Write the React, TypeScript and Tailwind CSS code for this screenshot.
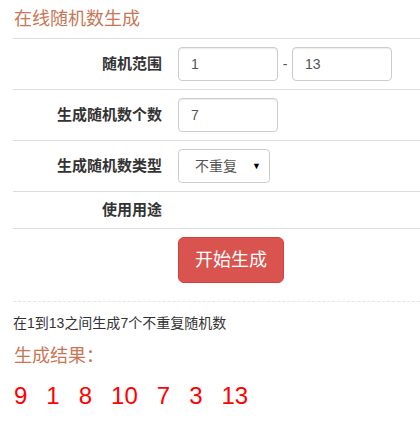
import { useState } from "react";

const font = { fontFamily: '"Liberation Sans", "Noto Sans CJK SC", sans-serif' };

function Row({ label, children }: { label: string; children?: React.ReactNode }) {
  return (
    <div className="flex border-t border-[#ddd]">
      <div className="w-[157px] shrink-0 p-2 text-right text-[15px] leading-5 font-bold text-[#333] flex items-center justify-end">
        {label}
      </div>
      <div className="p-2 flex items-center">{children}</div>
    </div>
  );
}

const inputCls =
  "w-[100px] h-[34px] px-3 border border-[#ccc] rounded text-sm text-[#555] outline-none shadow-[inset_0_1px_1px_rgba(0,0,0,0.075)]";

export default function App() {
  const [min, setMin] = useState("1");
  const [max, setMax] = useState("13");
  const [count, setCount] = useState("7");
  const [kind, setKind] = useState("不重复");
  const results = [9, 1, 8, 10, 7, 3, 13];

  return (
    <div className="w-[420px] bg-white pl-[13px] overflow-hidden" style={font}>
      {/* 标题 */}
      <div className="h-[38px] flex items-center pl-px text-[18px] text-[#c87756]">在线随机数生成</div>

      {/* 表单 */}
      <div>
        <Row label="随机范围">
          <input className={inputCls} value={min} onChange={(e) => setMin(e.target.value)} />
          <span className="w-[14px] text-center text-sm text-[#555]">-</span>
          <input className={inputCls} value={max} onChange={(e) => setMax(e.target.value)} />
        </Row>
        <Row label="生成随机数个数">
          <input className={inputCls} value={count} onChange={(e) => setCount(e.target.value)} />
        </Row>
        <Row label="生成随机数类型">
          <div className="relative">
            <select
              className="appearance-none w-[92px] h-[34px] pl-4 border border-[#ccc] rounded text-sm text-[#555] bg-white outline-none"
              value={kind}
              onChange={(e) => setKind(e.target.value)}
            >
              <option>不重复</option>
              <option>可重复</option>
            </select>
            <span className="absolute right-[9px] top-[11px] text-[9px] text-black pointer-events-none">▼</span>
          </div>
        </Row>
        <Row label="使用用途" />
        <div className="flex border-t border-[#ddd]">
          <div className="w-[157px] shrink-0" />
          <div className="p-2">
            <button className="h-[46px] px-4 rounded-md bg-[#d9534f] border border-[#d43f3a] text-[18px] text-white">
              开始生成
            </button>
          </div>
        </div>
      </div>

      <div className="mt-[10px] border-t border-dashed border-[#e5e5e5]" />

      <div className="mt-[11px] text-sm leading-5 text-[#333]">
        在{min}到{max}之间生成{count}个{kind}随机数
      </div>
      <div className="mt-[10px] h-[26px] flex items-center pl-px text-[18px] text-[#c87756]">生成结果：</div>
      <div className="mt-[13px] h-[28px] flex items-center gap-[19px] pl-px text-[24px] text-[#f00]">
        {results.map((n, i) => (
          <span key={i}>{n}</span>
        ))}
      </div>
    </div>
  );
}
